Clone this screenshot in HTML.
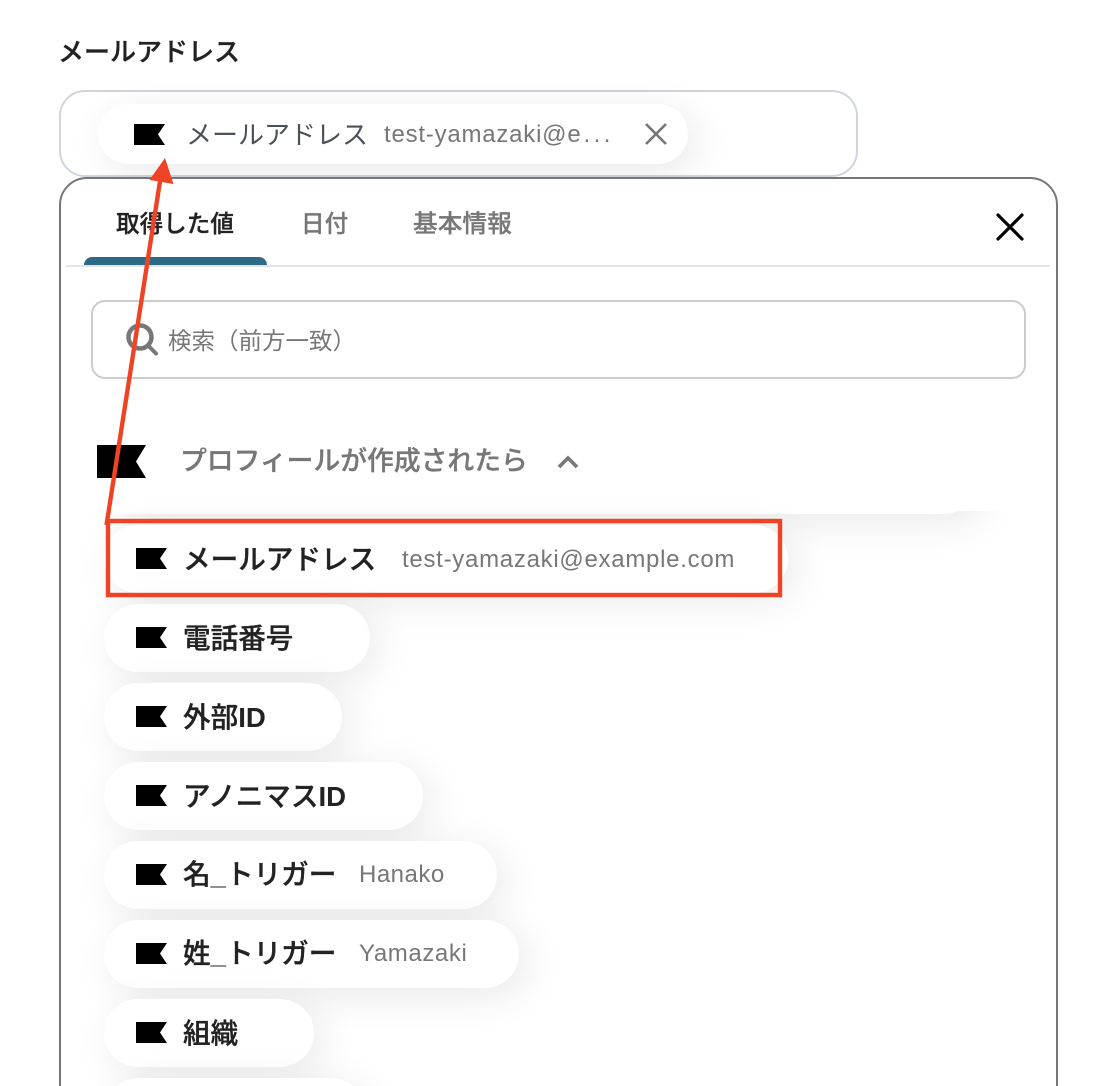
<!DOCTYPE html>
<html lang="ja"><head><meta charset="utf-8">
<style>
html,body{margin:0;padding:0;background:#fff}
#r{position:relative;width:1106px;height:1086px;overflow:hidden;background:#fff;font-family:"Liberation Sans","Noto Sans CJK JP",sans-serif;text-spacing-trim:space-all}
#r *{box-sizing:border-box}
.a{position:absolute;white-space:nowrap}
.pill{position:absolute;left:104px;height:68px;border-radius:34px;background:#fff;box-shadow:8px 8px 40px rgba(0,0,0,.09)}
.l{position:absolute;left:183px;font-weight:500;font-size:27.600px;line-height:40px;color:#222;white-space:nowrap;-webkit-text-stroke:.35px #222}
.l b{font-weight:700;-webkit-text-stroke:0}
.v{position:absolute;font-size:24px;line-height:40px;color:#777;white-space:nowrap}
.f{position:absolute;left:136px;width:32px;height:21px}
</style></head><body>
<div id="r">
<div class="a" style="left:58px;top:33px;font-size:26px;font-weight:500;-webkit-text-stroke:.35px #222;line-height:38px;color:#222">メールアドレス</div>
<div class="a" style="left:58.500px;top:90px;width:799px;height:87px;border:2px solid #d0d5dd;border-radius:26px;background:#fff"></div>
<div class="a" style="left:98px;top:104px;width:590px;height:60px;border-radius:30px;background:#fff;box-shadow:8px 8px 40px rgba(0,0,0,.09)"></div>
<svg class="a" style="left:134px;top:124px" width="32" height="21" viewBox="0 0 32 21"><path d="M0 0H31L24 10.500L31 21H0Z" fill="#000"/></svg>
<div class="a" style="left:186px;top:115px;font-size:26px;line-height:40px;color:#4b5159">メールアドレス</div>
<div class="a" style="left:384px;top:115px;font-size:24px;line-height:40px;color:#777;letter-spacing:.78px">test-yamazaki@e<span style="letter-spacing:3.500px;margin-left:2px">...</span></div>
<svg class="a" style="left:644px;top:122px" width="24" height="24" viewBox="0 0 24 24"><path d="M2 2L22 22M22 2L2 22" stroke="#777" stroke-width="2.600" fill="none"/></svg>

<div class="a" style="left:58.500px;top:177px;width:999px;height:1000px;border:2px solid #777;border-radius:28px;background:#fff"></div>
<div class="a" style="left:116px;top:206px;font-size:23.600px;font-weight:500;-webkit-text-stroke:.3px #222;line-height:38px;color:#222">取得した値</div>
<div class="a" style="left:301px;top:206px;font-size:23.600px;font-weight:500;-webkit-text-stroke:.3px #777;line-height:38px;color:#777">日付</div>
<div class="a" style="left:413px;top:206px;font-size:24.700px;font-weight:500;-webkit-text-stroke:.3px #777;line-height:38px;color:#777">基本情報</div>
<svg class="a" style="left:995px;top:212px" width="30" height="30" viewBox="0 0 30 30"><path d="M3 3L27 27M27 3L3 27" stroke="#000" stroke-width="3.200" stroke-linecap="round" fill="none"/></svg>
<div class="a" style="left:66px;top:265px;width:984px;height:2px;background:#e4e4e4"></div>
<div class="a" style="left:84px;top:257px;width:183px;height:8px;background:#2d6a85;border-radius:8px 8px 0 0"></div>

<div class="a" style="left:90.500px;top:299.500px;width:935px;height:79px;border:2px solid #ccc;border-radius:14px;background:#fff"></div>
<svg class="a" style="left:125px;top:323px" width="36" height="36" viewBox="0 0 36 36"><circle cx="15" cy="14" r="11.500" stroke="#777" stroke-width="4.500" fill="none"/><path d="M23.500 23L31 30.500" stroke="#777" stroke-width="4" stroke-linecap="round"/></svg>
<div class="a" style="left:168px;top:322px;font-size:23.500px;line-height:38px;color:#777">検索（前方一致）</div>

<div class="a" style="left:104px;top:446px;width:874px;height:68px;border-radius:34px;background:#fff;box-shadow:8px 8px 40px rgba(0,0,0,.09)"></div>
<div class="a" style="left:61px;top:400px;width:994px;height:111px;background:#fff"></div>
<div class="a" style="left:104px;top:500px;width:840px;height:14px;background:#fff"></div>
<svg class="a" style="left:97px;top:445px" width="50" height="34" viewBox="0 0 50 34"><path d="M0 0H49L39 16.500L49 33H0Z" fill="#000"/></svg>
<div class="a" style="left:180px;top:441px;font-size:26.800px;font-weight:500;-webkit-text-stroke:.3px #777;line-height:40px;color:#777">プロフィールが作成されたら</div>
<svg class="a" style="left:555px;top:452px" width="26" height="20" viewBox="0 0 26 20"><path d="M4 15L13 6L22 15" stroke="#777" stroke-width="3.600" fill="none"/></svg>

<div class="pill" style="top:525px;width:684px"></div>
<svg class="f" style="top:548px" viewBox="0 0 32 21"><path d="M0 0H31L24 10.500L31 21H0Z" fill="#000"/></svg>
<div class="l" style="top:540px">メールアドレス</div>
<div class="v" style="left:402px;top:540px;letter-spacing:.72px">test-yamazaki@example.com</div>

<div class="pill" style="top:604px;width:266px"></div>
<svg class="f" style="top:627px" viewBox="0 0 32 21"><path d="M0 0H31L24 10.500L31 21H0Z" fill="#000"/></svg>
<div class="l" style="top:619px">電話番号</div>

<div class="pill" style="top:683px;width:238px"></div>
<svg class="f" style="top:706px" viewBox="0 0 32 21"><path d="M0 0H31L24 10.500L31 21H0Z" fill="#000"/></svg>
<div class="l" style="top:698px">外部<b>ID</b></div>

<div class="pill" style="top:762px;width:319px"></div>
<svg class="f" style="top:785px" viewBox="0 0 32 21"><path d="M0 0H31L24 10.500L31 21H0Z" fill="#000"/></svg>
<div class="l" style="top:777px">アノニマス<b>ID</b></div>

<div class="pill" style="top:841px;width:393px"></div>
<svg class="f" style="top:864px" viewBox="0 0 32 21"><path d="M0 0H31L24 10.500L31 21H0Z" fill="#000"/></svg>
<div class="l" style="top:855px">名<b>_</b>トリガー</div>
<div class="v" style="left:359px;top:855px;letter-spacing:.5px">Hanako</div>

<div class="pill" style="top:920px;width:415px"></div>
<svg class="f" style="top:943px" viewBox="0 0 32 21"><path d="M0 0H31L24 10.500L31 21H0Z" fill="#000"/></svg>
<div class="l" style="top:934px">姓<b>_</b>トリガー</div>
<div class="v" style="left:359px;top:934px;letter-spacing:.6px">Yamazaki</div>

<div class="pill" style="top:999px;width:210px"></div>
<svg class="f" style="top:1022px" viewBox="0 0 32 21"><path d="M0 0H31L24 10.500L31 21H0Z" fill="#000"/></svg>
<div class="l" style="top:1014px">組織</div>

<div class="pill" style="top:1078px;width:261px"></div>

<svg class="a" style="left:0;top:0" width="1106" height="1086" viewBox="0 0 1106 1086">
<rect x="108" y="521" width="672" height="74" fill="none" stroke="#ee4425" stroke-width="4.400"/>
<path d="M106.500 525L160.500 178" stroke="#ee4425" stroke-width="4.400" fill="none"/>
<path d="M165 158L173.500 184L149.500 180Z" fill="#ee4425"/>
</svg>
</div>
</body></html>
